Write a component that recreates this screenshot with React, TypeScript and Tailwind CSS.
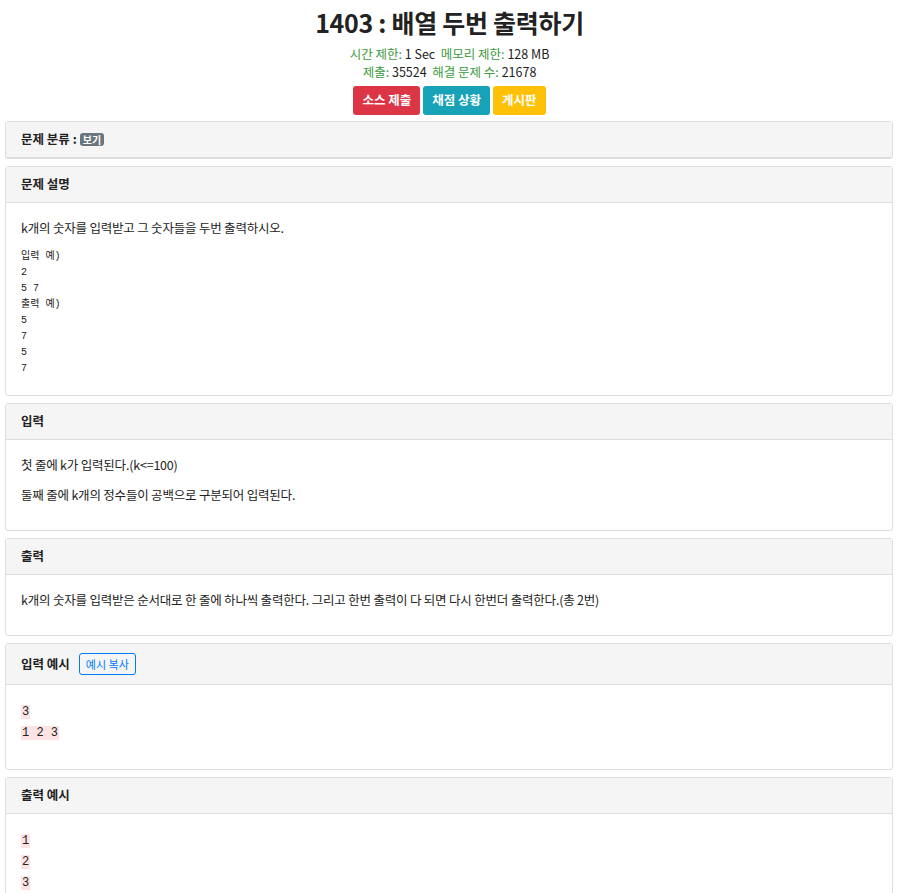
import React from "react";

const sans = "font-['Noto_Sans_CJK_KR','Noto_Sans',sans-serif]";
const mono = "font-['Liberation_Mono','Noto_Sans_CJK_KR',monospace]";

function Card({
  title,
  extra,
  tall,
  children,
}: {
  title: string;
  extra?: React.ReactNode;
  tall?: boolean;
  children?: React.ReactNode;
}) {
  return (
    <div className="mb-[7px] rounded-[3px] border border-[#dddddd] bg-white">
      <div
        className={`flex items-center border-b border-[#dddddd] bg-[#f5f5f5] px-[15px] text-[12.5px] font-bold text-[#222] ${
          tall ? "h-[41px]" : "h-[36px]"
        }`}
      >
        <span>{title}</span>
        {extra}
      </div>
      {children}
    </div>
  );
}

function Sample({ lines }: { lines: string[] }) {
  return (
    <div className="px-[15px] pt-[13px] pb-[15px]">
      {lines.map((l, i) => (
        <div key={i} className="h-[21px] leading-[21px]">
          <span className={`${mono} bg-[#fde3e3] px-[1px] text-[12px] text-[#222]`}>{l}</span>
        </div>
      ))}
      <div className="h-[14px]" />
    </div>
  );
}

export default function App() {
  return (
    <div className={`${sans} min-h-[893px] bg-white text-[#222]`}>
      <div className="pt-[4px] text-center">
        <h1 className="text-[25px] leading-[36px] font-bold tracking-[-0.3px] text-[#222]">1403 : 배열 두번 출력하기</h1>
        <div className="mt-[5px] text-[12.5px] leading-[18px]">
          <span className="text-[#3c9a3c]">시간 제한:</span> 1 Sec&nbsp;&nbsp;<span className="text-[#3c9a3c]">메모리 제한:</span> 128 MB
        </div>
        <div className="text-[12.5px] leading-[18px]">
          <span className="text-[#3c9a3c]">제출:</span> 35524&nbsp;&nbsp;<span className="text-[#3c9a3c]">해결 문제 수:</span> 21678
        </div>
        <div className="mt-[5px] flex justify-center gap-[3px]">
          <button className="h-[29px] rounded-[3px] bg-[#dc3545] px-[9px] text-[12.5px] font-bold text-white">소스 제출</button>
          <button className="h-[29px] rounded-[3px] bg-[#17a2b8] px-[9px] text-[12.5px] font-bold text-white">채점 상황</button>
          <button className="h-[29px] rounded-[3px] bg-[#ffc107] px-[9px] text-[12.5px] font-bold text-white">게시판</button>
        </div>
      </div>

      <div className="ml-[5px] mr-[6px] mt-[6px]">
        <Card
          title="문제 분류 :"
          extra={
            <span className="ml-[3px] rounded-[3px] bg-[#6c757d] px-[3px] text-[10px] leading-[13px] font-bold text-white">보기</span>
          }
        />

        <Card title="문제 설명">
          <div className="px-[15px] pt-[15px] pb-[18px] text-[12.5px] tracking-[-0.2px]">
            <p className="mb-[11px] leading-[20px]">k개의 숫자를 입력받고 그 숫자들을 두번 출력하시오.</p>
            <pre className={`${mono} text-[10px] leading-[16px] tracking-normal text-[#222]`}>
{`입력 예)
2
5 7
출력 예)
5
7
5
7`}
            </pre>
          </div>
        </Card>

        <Card title="입력">
          <div className="p-[15px] text-[12.5px] leading-[20px] tracking-[-0.2px]">
            <p className="mb-[10px]">첫 줄에 k가 입력된다.(k&lt;=100)</p>
            <p className="mb-[10px]">둘째 줄에 k개의 정수들이 공백으로 구분되어 입력된다.</p>
          </div>
        </Card>

        <Card title="출력">
          <div className="p-[15px] text-[12.5px] leading-[20px] tracking-[-0.2px]">
            <p className="mb-[10px]">
              k개의 숫자를 입력받은 순서대로 한 줄에 하나씩 출력한다. 그리고 한번 출력이 다 되면 다시 한번더 출력한다.(총 2번)
            </p>
          </div>
        </Card>

        <Card
          title="입력 예시"
          tall
          extra={
            <button className="ml-[9px] h-[22px] rounded-[3px] border border-[#007bff] px-[6px] text-[11px] font-normal text-[#007bff]">
              예시 복사
            </button>
          }
        >
          <Sample lines={["3", "1 2 3"]} />
        </Card>

        <Card title="출력 예시">
          <Sample lines={["1", "2", "3"]} />
        </Card>
      </div>
    </div>
  );
}
